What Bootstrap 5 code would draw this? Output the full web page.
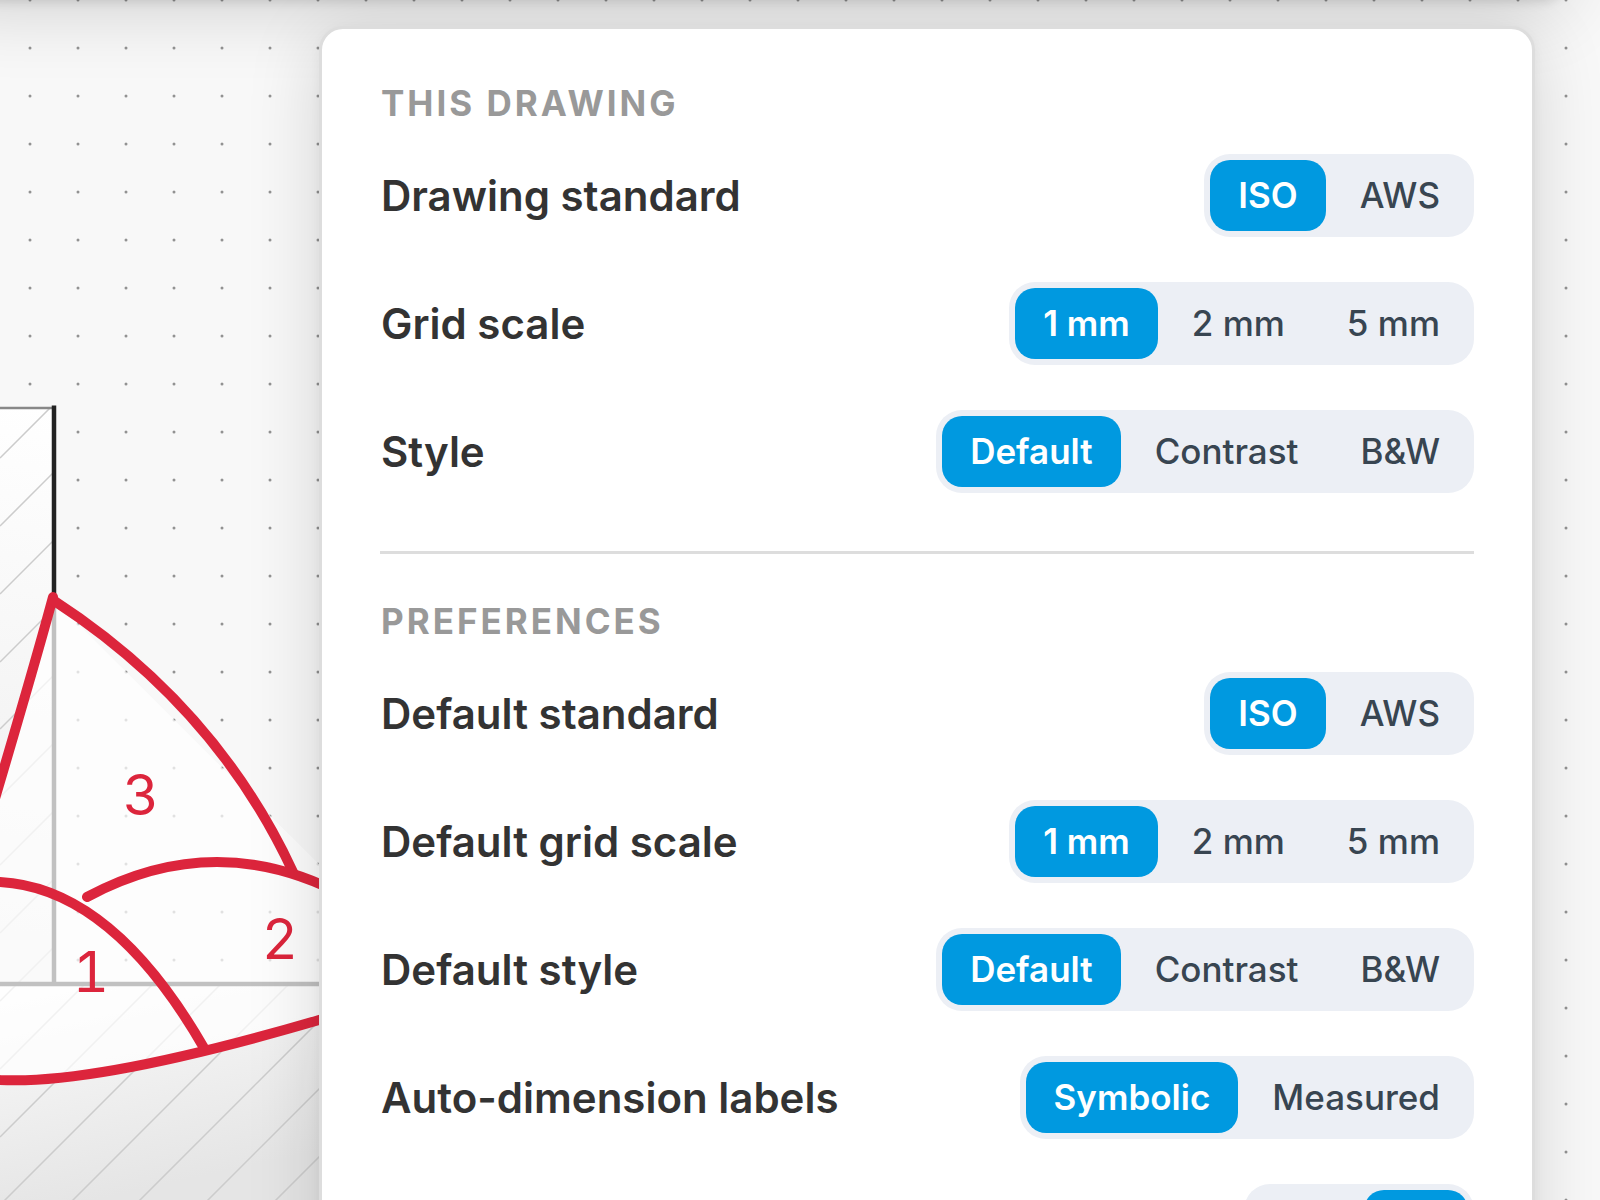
<!DOCTYPE html>
<html lang="en">
<head>
<meta charset="utf-8">
<meta name="viewport" content="width=device-width, initial-scale=1">
<title>Drawing settings</title>
<link href="https://cdn.jsdelivr.net/npm/bootstrap@5.3.0/dist/css/bootstrap.min.css" rel="stylesheet">
<style>
  body { font-family: Inter, "Liberation Sans", sans-serif; background: #f8f8f8; }
  .stage { padding: 26px 65px 0 319px; }
  .toolbar-edge { top: -100px; left: -60px; right: 34px; height: 98px; border-radius: 24px;
    box-shadow: 0 3px 12px rgba(0,0,0,.14), 0 12px 72px rgba(0,0,0,.16); }
  .settings-panel { background: #fff; border: 3px solid #ddd; border-radius: 24px; padding: 53px 58px 58px;
    margin-bottom: -400px; box-shadow: 0 3px 12px rgba(0,0,0,.04), 0 12px 72px rgba(0,0,0,.15); }
  .section-title { font-size: 35px; line-height: 42px; font-weight: 700; letter-spacing: 3px; color: #999; margin: 0 0 30px; padding-left: 1px; }
  .setting-list { gap: 45px; }
  .setting-name { font-size: 42px; line-height: 48px; font-weight: 600; color: #333; padding-left: 1px; }
  .segments { background: #eceff5; border-radius: 26px; padding: 6px; gap: 6px; }
  .segments .btn { font-size: 35px; line-height: 49px; font-weight: 500; color: #384551; padding: 11px 28px;
    border: 0; border-radius: 20px; }
  .segments .btn-check:checked + .btn { background: #0099e0; color: #fff; font-weight: 600; }
  .panel-rule { border-top: 3px solid #ddd; opacity: 1; margin: 58px 0 46px; }
  .pass-number { font-size: 56px; font-weight: 400; font-variant-numeric: tabular-nums; }
</style>
</head>
<body>
<main class="stage position-relative vh-100 overflow-hidden">
  <svg class="position-absolute top-0 start-0 w-100 h-100" role="img" aria-label="Weld joint drawing">
    <defs>
      <pattern id="dots" x="6" y="-24" width="48" height="48" patternUnits="userSpaceOnUse">
        <circle cx="24" cy="24" r="1.5" fill="#929292"/>
      </pattern>
      <linearGradient id="upright" gradientUnits="userSpaceOnUse" x1="54" y1="408" x2="-40" y2="984">
        <stop offset="0" stop-color="#fff"/><stop offset="1" stop-color="#ececec"/>
      </linearGradient>
      <linearGradient id="base" gradientUnits="userSpaceOnUse" x1="0" y1="984" x2="50" y2="1210">
        <stop offset="0" stop-color="#fbfbfb"/><stop offset="1" stop-color="#e5e5e5"/>
      </linearGradient>
      <clipPath id="plateClip"><path d="M-10 408H54V984H400V1300H-10Z"/></clipPath>
    </defs>
    <rect width="100%" height="100%" fill="url(#dots)"/>
    <path d="M-10 408H54V984H-10Z" fill="url(#upright)"/>
    <path d="M-10 984H400V1300H-10Z" fill="url(#base)"/>
    <g clip-path="url(#plateClip)" stroke="#ccc" stroke-width="1.5">
      <path d="M0 458L458 0M0 526L526 0M0 594L594 0M0 662L662 0M0 729L729 0M0 797L797 0M0 865L865 0M0 933L933 0M0 1001L1001 0M0 1069L1069 0M0 1137L1137 0M0 1205L1205 0M0 1273L1273 0M0 1340L1340 0M0 1408L1408 0M0 1476L1476 0"/>
    </g>
    <path d="M-10 408H54" stroke="#888" stroke-width="2.5"/>
    <path d="M54 405.500V984M-10 984H400" fill="none" stroke="#222" stroke-width="4.500"/>
    <path d="M54 600L400 945V1000L340 1014L319 1020Q97 1081 0 1079.500H-10V800L0 780Q36 660 53 597Z" fill="#fff" fill-opacity=".72"/>
    <g fill="none" stroke="#dc253c" stroke-width="10" stroke-linecap="round" stroke-linejoin="round">
      <path d="M-6 802Q36 660 53 597"/>
      <path d="M53 600Q216 706 293 872"/>
      <path d="M87 897Q217 827 347 897"/>
      <path d="M-12 882L0 882Q112 888 204 1048"/>
      <path d="M-12 1079L0 1080Q97 1085 319 1020L340 1014"/>
    </g>
    <g class="pass-number" fill="#dc253c" text-anchor="middle">
      <text x="141" y="815">3</text>
      <text x="280" y="959">2</text>
      <text x="91" y="992">1</text>
    </g>
  </svg>

  <div class="toolbar-edge position-absolute"></div>

  <section class="settings-panel position-relative">
    <h2 class="section-title">THIS DRAWING</h2>
    <div class="setting-list d-flex flex-column">
      <div class="d-flex justify-content-between align-items-center">
        <span class="setting-name" id="n1">Drawing standard</span>
        <div class="segments d-flex" role="radiogroup" aria-labelledby="n1">
          <input type="radio" class="btn-check" name="g1" id="g1a" checked><label class="btn" for="g1a">ISO</label>
          <input type="radio" class="btn-check" name="g1" id="g1b"><label class="btn" for="g1b">AWS</label>
        </div>
      </div>
      <div class="d-flex justify-content-between align-items-center">
        <span class="setting-name" id="n2">Grid scale</span>
        <div class="segments d-flex" role="radiogroup" aria-labelledby="n2">
          <input type="radio" class="btn-check" name="g2" id="g2a" checked><label class="btn" for="g2a">1 mm</label>
          <input type="radio" class="btn-check" name="g2" id="g2b"><label class="btn" for="g2b">2 mm</label>
          <input type="radio" class="btn-check" name="g2" id="g2c"><label class="btn" for="g2c">5 mm</label>
        </div>
      </div>
      <div class="d-flex justify-content-between align-items-center">
        <span class="setting-name" id="n3">Style</span>
        <div class="segments d-flex" role="radiogroup" aria-labelledby="n3">
          <input type="radio" class="btn-check" name="g3" id="g3a" checked><label class="btn" for="g3a">Default</label>
          <input type="radio" class="btn-check" name="g3" id="g3b"><label class="btn" for="g3b">Contrast</label>
          <input type="radio" class="btn-check" name="g3" id="g3c"><label class="btn" for="g3c">B&amp;W</label>
        </div>
      </div>
    </div>

    <hr class="panel-rule">

    <h2 class="section-title">PREFERENCES</h2>
    <div class="setting-list d-flex flex-column">
      <div class="d-flex justify-content-between align-items-center">
        <span class="setting-name" id="n4">Default standard</span>
        <div class="segments d-flex" role="radiogroup" aria-labelledby="n4">
          <input type="radio" class="btn-check" name="g4" id="g4a" checked><label class="btn" for="g4a">ISO</label>
          <input type="radio" class="btn-check" name="g4" id="g4b"><label class="btn" for="g4b">AWS</label>
        </div>
      </div>
      <div class="d-flex justify-content-between align-items-center">
        <span class="setting-name" id="n5">Default grid scale</span>
        <div class="segments d-flex" role="radiogroup" aria-labelledby="n5">
          <input type="radio" class="btn-check" name="g5" id="g5a" checked><label class="btn" for="g5a">1 mm</label>
          <input type="radio" class="btn-check" name="g5" id="g5b"><label class="btn" for="g5b">2 mm</label>
          <input type="radio" class="btn-check" name="g5" id="g5c"><label class="btn" for="g5c">5 mm</label>
        </div>
      </div>
      <div class="d-flex justify-content-between align-items-center">
        <span class="setting-name" id="n6">Default style</span>
        <div class="segments d-flex" role="radiogroup" aria-labelledby="n6">
          <input type="radio" class="btn-check" name="g6" id="g6a" checked><label class="btn" for="g6a">Default</label>
          <input type="radio" class="btn-check" name="g6" id="g6b"><label class="btn" for="g6b">Contrast</label>
          <input type="radio" class="btn-check" name="g6" id="g6c"><label class="btn" for="g6c">B&amp;W</label>
        </div>
      </div>
      <div class="d-flex justify-content-between align-items-center">
        <span class="setting-name" id="n7">Auto-dimension labels</span>
        <div class="segments d-flex" role="radiogroup" aria-labelledby="n7">
          <input type="radio" class="btn-check" name="g7" id="g7a" checked><label class="btn" for="g7a">Symbolic</label>
          <input type="radio" class="btn-check" name="g7" id="g7b"><label class="btn" for="g7b">Measured</label>
        </div>
      </div>
      <div class="d-flex justify-content-end">
        <div class="segments d-flex" role="radiogroup" aria-label="Toggle">
          <input type="radio" class="btn-check" name="g8" id="g8a"><label class="btn" for="g8a">Off</label>
          <input type="radio" class="btn-check" name="g8" id="g8b" checked><label class="btn" for="g8b">On</label>
        </div>
      </div>
    </div>
  </section>
</main>
<script src="https://cdn.jsdelivr.net/npm/bootstrap@5.3.0/dist/js/bootstrap.bundle.min.js"></script>
</body>
</html>
